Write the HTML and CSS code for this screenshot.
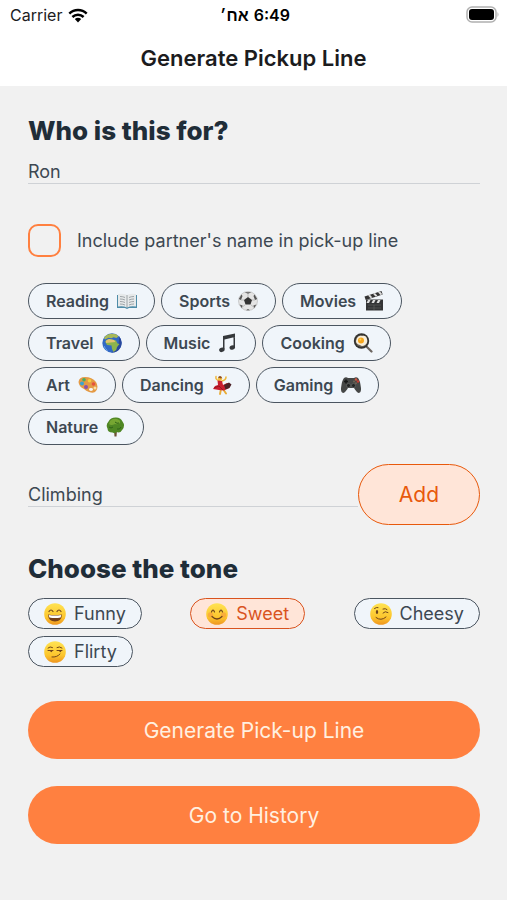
FILE: index.html
```html
<!DOCTYPE html>
<html lang="en">
    <head>
        <meta charset="utf-8">
        <meta name="viewport" content="width=device-width, initial-scale=1">
        <title>Generate Pickup Line</title>
        <link rel="stylesheet" href="styles.css">
    </head>
    <body>
        <header class="header">
            <div class="status-bar">
                <div class="carrier">
                    <span>Carrier</span>
                    <svg class="wifi" viewBox="0 0 20 15" aria-hidden="true">
                        <path d="M1.3 5.6a12.6 12.6 0 0 1 17.4 0M4.4 9a8.2 8.2 0 0 1 11.2 0" fill="none" stroke="#000" stroke-width="2.5"/>
                        <path d="M6.8 11.1a4.8 4.8 0 0 1 6.4 0L10 14.6z"/>
                    </svg>
                </div>
                <div class="time"><span lang="he">אח׳</span><span>6:49</span></div>
                <svg class="battery" viewBox="0 0 34 18" aria-hidden="true">
                    <rect x="1" y="1" width="29" height="15" rx="5" fill="#fff" stroke="#b0b0b0" stroke-width="1.5"/>
                    <rect x="3" y="3" width="25" height="11" rx="3"/>
                    <path d="M31.5 6q2 2.5 0 5z" fill="#b0b0b0"/>
                </svg>
            </div>
            <h1 class="title">Generate Pickup Line</h1>
        </header>
        <main class="content">
            <h2 class="heading"><label for="name">Who is this for?</label></h2>
            <input class="field" id="name" type="text" value="Ron">

            <div class="include">
                <input class="checkbox" id="include-name" type="checkbox">
                <label for="include-name">Include partner's name in pick-up line</label>
            </div>

            <div class="interests">
                <button class="chip" type="button">Reading
                    <svg class="emoji" viewBox="0 0 20 20" aria-hidden="true">
                        <path d="M0 4h20v13h-8l-2 1-2-1H0z" fill="#4e8ca8"/>
                        <path d="M1 3q5-1 9 1 4-2 9-1v12.5q-5-1-9 1-4-2-9-1z" fill="#e6e9ea"/>
                        <path d="M10 4v12.5M3 5.5q3 0 5 1M3 8q3 0 5 1M3 10.500q3 0 5 1M3 13q3 0 5 1M17 5.5q-3 0-5 1M17 8q-3 0-5 1M17 10.5q-3 0-5 1M17 13q-3 0-5 1" fill="none" stroke="#8b9297" stroke-width=".8"/>
                    </svg>
                </button>
                <button class="chip" type="button">Sports
                    <svg class="emoji" viewBox="0 0 20 20" aria-hidden="true">
                        <circle cx="10" cy="10" r="9.5" fill="#e4e4e4" stroke="#b5b5b5" stroke-width=".6"/>
                        <path d="M10 6l4 3-1.500 4.500h-5L6 9z" fill="#333"/>
                        <path d="M6.5 1.200l3.500 1.600 3.500-1.600M.8 8l2.200 1 1.500-4-1-1.500M19.200 8L17 9l-1.500-4 1-1.500M4 17.300l.6-2.800-3-1M16 17.300l-.6-2.800 3-1M8 19.300l2-1.300 2 1.300" fill="#555"/>
                        <path d="M10 3v3M3 9h3M14 9h3M7.5 13.500l-2.500 2M12.500 13.500l2.500 2" stroke="#aaa" stroke-width=".7"/>
                    </svg>
                </button>
                <button class="chip" type="button">Movies
                    <svg class="emoji" viewBox="0 0 20 20" aria-hidden="true">
                        <path d="M.5 5.500L17.500 0l1.200 3.500L1.700 9z" fill="#333"/>
                        <path d="M4 4.400l2-.7 2.400 2.700-2 .7zM9 2.800l2-.7 2.400 2.700-2 .7zM14 1.200l2-.7 2.400 2.700-2 .7z" fill="#ddd"/>
                        <path d="M2 8.500h17v11H2z" fill="#343536"/>
                        <path d="M4 9h2.500L5 12H2.500zM9 9h2.500L10 12H7.500zM14 9h2.500L15 12h-2.500z" fill="#ddd"/>
                        <path d="M4 14h13M4 17h13M10 14v5" stroke="#666" stroke-width=".6"/>
                    </svg>
                </button>
                <button class="chip" type="button">Travel
                    <svg class="emoji" viewBox="0 0 20 20" aria-hidden="true">
                        <circle cx="10" cy="10" r="9.700" fill="#3268c4"/>
                        <path d="M17 3.300a9.700 9.700 0 0 1-8 16.200q9-3 8-16.200" fill="#29479b"/>
                        <path d="M4 2.500Q8-.5 14 1.300l2.500 2-2 1.700-3-.8-2 1-3-.5L3 6.500 2 5z" fill="#a8b957"/>
                        <path d="M3 8.500l3-2.500 4 .5 4 1 1.500 3 2 .5-2.500 3-.8 3-2.700 2-1.500-3-.5-3.500-4.500-.5z" fill="#8db34c"/>
                        <path d="M4 7.500l3-1.500 5 1 1.500 2-5 .5-4.500.5z" fill="#e2c16f"/>
                        <path d="M2 13q1 3 3.500 4.500" stroke="#67a3e8" fill="none"/>
                    </svg>
                </button>
                <button class="chip" type="button">Music
                    <svg class="emoji" viewBox="0 0 20 20" aria-hidden="true">
                        <path d="M5 3L17 .5V4L6.500 6.500V16H5zM15.500 3H17v11h-1.500z" fill="#35383b"/>
                        <ellipse cx="3.900" cy="16.800" rx="2.800" ry="2.200" transform="rotate(-20 3.900 16.800)" fill="#35383b"/>
                        <ellipse cx="14.300" cy="14.500" rx="2.800" ry="2.200" transform="rotate(-20 14.300 14.500)" fill="#35383b"/>
                    </svg>
                </button>
                <button class="chip" type="button">Cooking
                    <svg class="emoji" viewBox="0 0 20 20" aria-hidden="true">
                        <path d="M13 13l5.500 5.500" stroke="#6b6560" stroke-width="2.200" stroke-linecap="round"/>
                        <circle cx="8.500" cy="8" r="7.700" fill="#343331"/>
                        <circle cx="8.500" cy="8" r="6" fill="#6b6357"/>
                        <path d="M4 5q2-3 5-2 4-1 5 3 1 4-2 6-3 2-5 0-4-1-4-4z" fill="#f8eed9"/>
                        <circle cx="8" cy="7.500" r="3" fill="#f6a51c"/>
                        <circle cx="7.300" cy="6.500" r="1" fill="#ffd45c"/>
                    </svg>
                </button>
                <button class="chip" type="button">Art
                    <svg class="emoji" viewBox="0 0 20 20" aria-hidden="true">
                        <path d="M.5 7Q1 2 7 2q7 0 11 5 3 5 0 9-2 3-7 1-3-1-5-3-5-2-5.500-7z" fill="#e49a45"/>
                        <ellipse cx="13" cy="14.500" rx="2" ry="1.400" fill="#f4f7fa"/>
                        <circle cx="4" cy="8.500" r="2" fill="#3aa4d4"/>
                        <circle cx="6" cy="4.800" r="1.800" fill="#48ad61"/>
                        <circle cx="11.500" cy="5.800" r="1.800" fill="#f5d13d"/>
                        <circle cx="15.500" cy="9" r="1.800" fill="#e5523e"/>
                        <circle cx="8" cy="12" r="2" fill="#8c50a9"/>
                        <circle cx="17" cy="13" r="1.500" fill="#fae0a5"/>
                    </svg>
                </button>
                <button class="chip" type="button">Dancing
                    <svg class="emoji" viewBox="0 0 20 20" aria-hidden="true">
                        <path d="M8 6Q3 5 4 1.500M10 6q4-1 4-4" stroke="#efb83b" stroke-width="1.500" fill="none" stroke-linecap="round"/>
                        <circle cx="8" cy="3.500" r="2.200" fill="#f2bd3e"/>
                        <path d="M6 2.500q2-3 4 0l-1 1z" fill="#8a4a2a"/>
                        <path d="M9 14l-1 5M11 14l3 4.500" stroke="#e9ad37" stroke-width="1.900" stroke-linecap="round"/>
                        <path d="M5.500 5.500L10 6l1 4 4-2 3 1-1 4-5 2.500-5-.5L1 14l2-3 3-1z" fill="#c91d2d"/>
                        <path d="M12 10l5-2.500 2.500 2-2 3.500-4 1.500z" fill="#4a2126"/>
                        <path d="M2 13l5-2 4 4" stroke="#8c1420" stroke-width=".8" fill="none"/>
                    </svg>
                </button>
                <button class="chip" type="button">Gaming
                    <svg class="emoji" viewBox="0 0 20 20" aria-hidden="true">
                        <path d="M3 3q2-1.500 4 0h6q2-1.500 4 0 2 2 3 10 .3 5-2 5-2 0-5-5H7q-3 5-5 5-2.300 0-2-5Q1 5 3 3z" fill="#454746"/>
                        <path d="M3 6.500h4M5 4.500v4" stroke="#151616" stroke-width="1.500"/>
                        <circle cx="7.500" cy="10.500" r="2" fill="#212323" stroke="#737675" stroke-width=".5"/>
                        <circle cx="12.500" cy="10.500" r="2" fill="#212323" stroke="#737675" stroke-width=".5"/>
                        <circle cx="15" cy="4.500" r="1.200" fill="#d35841"/>
                        <circle cx="17" cy="6.500" r="1.200" fill="#c93d32"/>
                        <circle cx="13" cy="6.500" r="1" fill="#716452"/>
                        <circle cx="15" cy="8.300" r="1" fill="#716452"/>
                    </svg>
                </button>
                <button class="chip" type="button">Nature
                    <svg class="emoji" viewBox="0 0 20 20" aria-hidden="true">
                        <path d="M8 13h3l-.5 6.500h-2z" fill="#6c5134"/>
                        <path d="M9.500.5q5-.3 7 4 3 4 0 8-2 4-6 2.500-1 2-4 .5-5 0-5-4-2-4 1-7 2-4 7-4z" fill="#4f8724"/>
                        <path d="M4 4q3-3 7-2 4 1 3 4-2 2-5 1-4 2-6 0z" fill="#76a632"/>
                        <path d="M3 10q2 2 4 0M11 12q3 1 4-2M9 5q2 2 4 1" stroke="#2f6319" fill="none"/>
                    </svg>
                </button>
            </div>

            <form class="add-form">
                <input class="field" type="text" value="Climbing" aria-label="Interest">
                <button class="add" type="button">Add</button>
            </form>

            <h2 class="heading">Choose the tone</h2>
            <div class="tones">
                <button class="tone" type="button" aria-pressed="false">
                    <svg class="face" viewBox="0 0 22 22" aria-hidden="true">
                        <defs>
                            <linearGradient id="skin" x1="0" y1="0" x2="0" y2="1">
                                <stop offset="0" stop-color="#ffe353"/>
                                <stop offset=".65" stop-color="#fcc62d"/>
                                <stop offset="1" stop-color="#ee9520"/>
                            </linearGradient>
                        </defs>
                        <circle cx="11" cy="11" r="10.800" fill="url(#skin)"/>
                        <path d="M5 8.500q2-3 4 0M13 8.500q2-3 4 0" fill="none" stroke="#70451a" stroke-width="1.200" stroke-linecap="round"/>
                        <path d="M4 11.500q7 1.200 14 0-.5 7-7 7t-7-7z" fill="#744019"/>
                        <path d="M4.700 12q6.300 1 12.600 0l-.7 2.500q-5.600 1-11.200 0z" fill="#fff"/>
                    </svg>
                    Funny
                </button>
                <button class="tone selected" type="button" aria-pressed="true">
                    <svg class="face" viewBox="0 0 22 22" aria-hidden="true">
                        <circle cx="11" cy="11" r="10.800" fill="url(#skin)"/>
                        <circle cx="4.500" cy="12" r="2.700" fill="#f99a3d" opacity=".6"/>
                        <circle cx="17.500" cy="12" r="2.700" fill="#f99a3d" opacity=".6"/>
                        <path d="M5.500 9q1.500-4 3 0M13.500 9q1.500-4 3 0M6 13.500q5 5 10 0" fill="none" stroke="#70451a" stroke-width="1.200" stroke-linecap="round"/>
                    </svg>
                    Sweet
                </button>
                <button class="tone" type="button" aria-pressed="false">
                    <svg class="face" viewBox="0 0 22 22" aria-hidden="true">
                        <circle cx="11" cy="11" r="10.800" fill="url(#skin)"/>
                        <ellipse cx="7" cy="9" rx="1.200" ry="1.900" fill="#70451a"/>
                        <path d="M4.500 5.500q2-1.500 3.500-1M13 6q2.500-1 4 .5M13 10q2-2.500 5-.5M6 14.500q5 4 10-.5" fill="none" stroke="#70451a" stroke-linecap="round"/>
                    </svg>
                    Cheesy
                </button>
                <button class="tone" type="button" aria-pressed="false">
                    <svg class="face" viewBox="0 0 22 22" aria-hidden="true">
                        <circle cx="11" cy="11" r="10.800" fill="url(#skin)"/>
                        <path d="M4 7q2-2 4.500-.5M13 6.500q2.500-1.500 5 .5M4 9.500h5M13 9.500h5M8 16q5 .5 8-3" fill="none" stroke="#70451a" stroke-linecap="round"/>
                        <path d="M6 9.500h2.500q-.3 1.800-1.200 1.800T6 9.500zM15 9.500h2.500q-.3 1.800-1.200 1.800T15 9.500z" fill="#70451a"/>
                    </svg>
                    Flirty
                </button>
            </div>

            <div class="actions">
                <button class="action" type="button">Generate Pick-up Line</button>
                <button class="action" type="button">Go to History</button>
            </div>
        </main>
    </body>
</html>
```

FILE: styles.css
```css
* {
    box-sizing: border-box;
}
body {
    margin: 0;
    background: #f1f1f1;
    color: #3d4852;
    font-family: Inter, "Liberation Sans", sans-serif;
    font-size: 18px;
}
button, input {
    margin: 0;
    color: inherit;
    font-family: inherit;
}
button {
    cursor: pointer;
}
.header {
    padding-bottom: 12px;
    background: #fff;
    color: #1c1c1e;
}
.status-bar {
    display: grid;
    grid-template-columns: 1fr auto 1fr;
    align-items: center;
    height: 30px;
    padding: 0 7px 0 10px;
    font-size: 16px;
}
.carrier {
    display: flex;
    align-items: center;
    gap: 6px;
}
.wifi {
    width: 20px;
    height: 15px;
}
.time {
    display: flex;
    gap: 5px;
    color: #000;
    font-weight: 600;
}
.battery {
    justify-self: end;
    width: 34px;
    height: 18px;
}
.title {
    margin: 12px 0 0;
    font-size: 22px;
    font-weight: 600;
    line-height: 32px;
    text-align: center;
}
.content {
    padding: 28px 27px 28px 28px;
}
.heading {
    margin: 0;
    color: #1f2d38;
    font-size: 26px;
    font-weight: 800;
    line-height: 34px;
}
.field {
    display: block;
    width: 100%;
    height: 24px;
    padding: 0;
    border: 0;
    border-bottom: 1px solid #cfd2d6;
    border-radius: 0;
    background: transparent;
    font-size: 18px;
    outline: none;
}
.heading + .field {
    margin-top: 12px;
}
.include {
    display: flex;
    align-items: center;
    gap: 16px;
    margin-top: 40px;
}
.checkbox {
    width: 33px;
    height: 33px;
    border: 2px solid #ff8040;
    border-radius: 10px;
    appearance: none;
}
.checkbox:checked {
    background: #ff8040;
}
.interests {
    display: flex;
    flex-wrap: wrap;
    gap: 6px;
    margin-top: 26px;
}
.chip {
    display: flex;
    align-items: center;
    gap: 8px;
    height: 36px;
    padding: 0 17px;
    border: 1px solid #4b5560;
    border-radius: 18px;
    background: #f0f5fa;
    font-size: 16px;
    font-weight: 600;
}
.emoji {
    width: 20px;
    height: 20px;
}
.add-form {
    display: flex;
    align-items: center;
    margin: 19px 0 27px;
}
.add-form .field {
    flex: 1;
    min-width: 0;
}
.add {
    height: 61px;
    padding: 0 40px;
    border: 1px solid #e8590c;
    border-radius: 31px;
    background: #ffe5d8;
    color: #e8590c;
    font-size: 21px;
}
.tones {
    display: flex;
    flex-wrap: wrap;
    justify-content: space-between;
    gap: 7px;
    margin-top: 12px;
}
.tone {
    display: flex;
    align-items: center;
    gap: 8px;
    height: 31px;
    padding: 0 15px;
    border: 1px solid #4b5560;
    border-radius: 16px;
    background: #f0f5fa;
    font-size: 18px;
}
.tone.selected {
    border-color: #d9531e;
    background: #ffe5d8;
    color: #d9531e;
}
.face {
    width: 22px;
    height: 22px;
}
.actions {
    display: flex;
    flex-direction: column;
    gap: 27px;
    margin-top: 34px;
}
.action {
    height: 58px;
    border: 0;
    border-radius: 29px;
    background: #ff8040;
    color: #fff0e0;
    font-size: 21px;
}
```
